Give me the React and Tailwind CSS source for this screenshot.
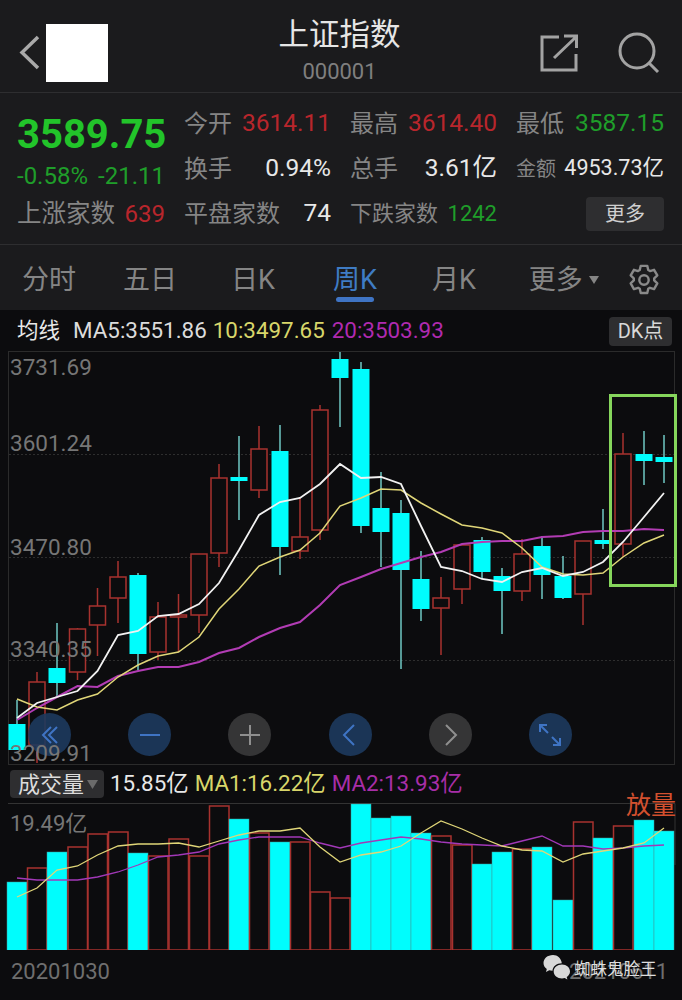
import React from 'react';

const SANS = "font-['Roboto','Noto_Sans_CJK_SC',sans-serif]";

// x, body top, body bottom, wick top, wick bottom, up(red) or down(cyan)
const candles = [
  [17, 724, 750, 700, 750, 0], [37, 682, 745, 672, 763, 1], [57, 668, 683, 623, 697, 0], [77.5, 629, 672, 628, 680, 1],
  [97.5, 606, 625, 588, 656, 1], [118, 577, 598, 561, 623, 1], [138, 575, 654, 573, 670, 0], [158, 617, 652, 602, 660, 1],
  [178.5, 615, 617, 594, 652, 1], [199, 554, 615, 554, 633, 1], [219, 478, 553, 464, 567, 1], [239, 477, 481, 436, 520, 0],
  [259, 449, 490, 426, 498, 1], [280, 451, 547, 425, 575, 0], [300, 537, 551, 498, 559, 1], [320, 410, 530, 405, 540, 1],
  [340, 359, 378, 352, 427, 0], [361, 369, 526, 362, 533, 0], [381, 508, 532, 472, 567, 0], [401, 513, 570, 500, 669, 0],
  [421, 579, 609, 551, 621, 0], [441, 598, 608, 577, 655, 1], [462, 545, 589, 545, 604, 1], [482, 540, 572, 537, 579, 0],
  [502, 576, 591, 568, 634, 0], [522, 554, 591, 539, 601, 1], [542, 546, 575, 536, 599, 0], [563, 576, 598, 556, 599, 0],
  [583, 541, 594, 541, 625, 1], [603, 540, 544, 509, 549, 0], [623, 454, 544, 433, 557, 1], [644, 454, 461, 431, 485, 0],
  [664, 457, 462, 435, 483, 0],
];

const volumes = [
  [882, 0], [868, 1], [852, 0], [847, 1], [834, 1], [832, 1], [853, 0], [856, 1], [839, 1], [856, 1], [806, 1],
  [819, 0], [833, 1], [842, 0], [842, 1], [892, 1], [898, 1], [804, 0], [818, 0], [816, 0], [833, 0], [836, 1],
  [845, 1], [864, 0], [852, 0], [849, 1], [847, 0], [900, 0], [822, 1], [838, 0], [826, 1], [820, 0], [831, 0],
];

const ma5 = [718, 703, 697, 691, 671, 635, 631, 616, 614, 604, 583, 550, 515, 502, 498, 484, 464, 478, 477, 484, 526, 567, 571, 579, 582, 572, 568, 576, 572, 562, 542, 517, 493];
const ma10 = [699, 707, 710, 700, 694, 677, 665, 656, 652, 637, 609, 589, 566, 557, 550, 533, 506, 498, 489, 490, 503, 514, 525, 528, 533, 548, 567, 574, 575, 573, 557, 543, 535];
const ma20 = [720, 708, 697, 686, 687, 676, 671, 667, 667, 662, 653, 648, 637, 628, 622, 605, 585, 577, 569, 563, 557, 552, 544, 542, 541, 541, 537, 536, 532, 531, 531, 529, 530];
const vol1 = [897, 888, 870, 866, 855, 846, 844, 844, 843, 847, 841, 835, 831, 831, 828, 847, 862, 855, 852, 846, 833, 821, 829, 838, 846, 850, 851, 862, 854, 851, 848, 843, 828];
const vol2 = [878, 880, 880, 880, 877, 872, 865, 857, 855, 852, 844, 840, 837, 837, 837, 843, 848, 843, 840, 837, 839, 842, 844, 845, 846, 841, 836, 846, 846, 849, 848, 846, 845];

const linePoints = (values) => values.map((y, i) => `${candles[i][0]},${y}`).join(' ');

const Quote = ({ label, value, color, labelSize = 'text-[24px]', valueSize = 'text-[24.500px]' }) => (
  <div className="flex items-center justify-between whitespace-nowrap">
    <span className={`${labelSize} text-[#858585]`}>{label}</span>
    <span className={`${valueSize} ${color}`}>{value}</span>
  </div>
);

const Tab = ({ label, className }) => (
  <span className={`text-[27px] leading-none ${className}`}>{label}</span>
);

const RoundButton = ({ blue, children }) => (
  <div className={`flex h-[43px] w-[43px] items-center justify-center rounded-full ${blue ? 'bg-[#1d3a5e]/90' : 'bg-[#3a3a3b]/90'}`}>
    <svg width="26" height="26" viewBox="0 0 26 26" fill="none" stroke={blue ? '#3f74c4' : '#8f8f8f'} strokeWidth="2">
      {children}
    </svg>
  </div>
);

export default function App() {
  return (
    <div className={`${SANS} flex h-[1000px] w-[682px] flex-col overflow-hidden bg-[#0c0c0e]`}>
      {/* title bar */}
      <header className="grid h-[93px] grid-cols-[1fr_auto_1fr] items-center border-b border-[#2e2e30] bg-[#1b1b1d] pl-[19px] pr-[22px] pt-[13px]">
        <div className="flex items-center">
          <svg width="21" height="35" viewBox="0 0 21 35" fill="none" stroke="#a9a9a9" strokeWidth="3.5">
            <path d="M19 2 3 17.500 19 33" />
          </svg>
          <div className="ml-[6px] h-[58px] w-[62px] bg-white" />
        </div>
        <div className="flex flex-col items-center pb-[4px]">
          <span className="text-[30.500px] leading-[36px] text-[#e6e6e6]">上证指数</span>
          <span className="mt-[7px] text-[22px] leading-[24px] text-[#7f7f7f]">000001</span>
        </div>
        <div className="flex items-center justify-end">
          <svg width="38" height="38" viewBox="0 0 38 38" fill="none" stroke="#a3a3a3" strokeWidth="3" className="mr-[40px]">
            <path d="M19 3H2v33h34V20" />
            <path d="M14 24 36 3M24 2h12.500v12" />
          </svg>
          <svg width="42" height="42" viewBox="0 0 42 42" fill="none" stroke="#a3a3a3" strokeWidth="3">
            <circle cx="19" cy="19" r="17" />
            <path d="m31 31 9 9" />
          </svg>
        </div>
      </header>

      {/* quote */}
      <section className="flex h-[152px] border-b border-[#2e2e30] bg-[#1b1b1d] pl-[17px] pr-[18px] pt-[8px]">
        <div className="flex w-[148px] flex-col">
          <span className="mt-[14px] text-[40px] font-bold leading-[40px] text-[#22c42a]">3589.75</span>
          <div className="mt-[3px] flex justify-between text-[24px] leading-[36px] text-[#1f9e2a]">
            <span>-0.58%</span>
            <span>-21.11</span>
          </div>
          <div className="mt-[2px] flex items-center justify-between leading-[36px]">
            <span className="text-[24.500px] text-[#858585]">上涨家数</span>
            <span className="text-[24px] text-[#b8262c]">639</span>
          </div>
        </div>
        <div className="ml-[19px] grid flex-1 grid-cols-[147px_147px_148px] grid-rows-[45px_45px_45px] gap-x-[19px]">
          <Quote label="今开" value="3614.11" color="text-[#b8262c]" />
          <Quote label="最高" value="3614.40" color="text-[#b8262c]" />
          <Quote label="最低" value="3587.15" color="text-[#1f9e2a]" />
          <Quote label="换手" value="0.94%" color="text-[#e8e8e8]" />
          <Quote label="总手" value="3.61亿" color="text-[#e8e8e8]" />
          <Quote label="金额" value="4953.73亿" color="text-[#e8e8e8]" labelSize="text-[20px]" valueSize="text-[21.500px]" />
          <Quote label="平盘家数" value="74" color="text-[#e8e8e8]" />
          <Quote label="下跌家数" value="1242" color="text-[#1f9e2a]" labelSize="text-[22px]" valueSize="text-[22px]" />
          <div className="flex items-center justify-end">
            <span className="flex h-[34px] w-[78px] items-center justify-center rounded bg-[#2e2e30] text-[20px] text-[#d0d0d0]">更多</span>
          </div>
        </div>
      </section>

      {/* period tabs */}
      <nav className="relative flex h-[65px] items-center bg-[#1b1b1d] pl-[22px] pt-[5px]">
        <Tab label="分时" className="text-[#858585]" />
        <Tab label="五日" className="ml-[47px] text-[#858585]" />
        <Tab label="日K" className="ml-[54px] text-[#858585]" />
        <Tab label="周K" className="ml-[58px] text-[#3f7cc4]" />
        <Tab label="月K" className="ml-[55px] text-[#858585]" />
        <Tab label="更多" className="ml-[53px] text-[#858585]" />
        <svg width="10" height="8" viewBox="0 0 10 8" className="ml-[6px]"><path d="M0 0h10L5 8z" fill="#858585" /></svg>
        <svg width="34" height="36" viewBox="0 0 24 24" fill="none" stroke="#8a8a8a" strokeWidth="1.700" strokeLinejoin="round" className="ml-[28px]">
          <path d="M9.700 2h4.600l.7 3 1.200.7 2.900-.9 2.300 4-2.200 2.100v1.400l2.200 2.100-2.300 4-2.900-.9-1.200.7-.7 3H9.700l-.7-3-1.200-.7-2.900.9-2.300-4 2.200-2.100v-1.400L2.600 8.800l2.300-4 2.900.9L9 5z" />
          <circle cx="12" cy="12" r="3.300" />
        </svg>
        <div className="absolute bottom-[8px] left-[336px] h-[5px] w-[38px] rounded-full bg-[#3f74c4]" />
      </nav>

      {/* moving averages */}
      <div className="flex h-[40px] items-center pl-[17px] pr-[10px] pt-[2px] text-[22.400px]">
        <span className="text-[21.500px] text-[#e8e8e8]">均线</span>
        <span className="ml-[13px] text-[#dcdcdc]">MA5:3551.86</span>
        <span className="ml-[6px] text-[#d8d66a]">10:3497.65</span>
        <span className="ml-[7px] text-[#b02ab0]">20:3503.93</span>
        <span className="ml-auto flex h-[29px] w-[63px] items-center justify-center rounded bg-[#2e2e30] text-[20px] text-[#d8d8d8]">DK点</span>
      </div>

      {/* candlestick chart */}
      <div className="relative h-[420px] text-[22.500px] leading-none text-[#767676]">
        <svg width="682" height="420" viewBox="0 350 682 420" className="block">
          <rect x="8.500" y="351.500" width="666" height="413" fill="none" stroke="#2b2b2b" />
          {[454, 557, 660].map((y) => (
            <line key={y} x1="9" x2="674" y1={y + 0.5} y2={y + 0.5} stroke="#2e2e2e" strokeDasharray="2 2" />
          ))}
          {candles.map(([x, top, bottom, wickTop, wickBottom, up]) => (
            <g key={x}>
              <line x1={x} x2={x} y1={wickTop} y2={top} stroke={up ? '#a8322f' : '#6fc9c4'} strokeWidth="1.500" />
              <line x1={x} x2={x} y1={bottom} y2={wickBottom} stroke={up ? '#a8322f' : '#6fc9c4'} strokeWidth="1.500" />
              {up ? (
                <rect x={x - 8} y={top} width="16" height={Math.max(bottom - top, 2)} fill="#0c0c0e" stroke="#a8322f" strokeWidth="1.500" />
              ) : (
                <rect x={x - 8.500} y={top} width="17" height={bottom - top} fill="#00fdfd" />
              )}
            </g>
          ))}
          <polyline points={linePoints(ma20)} fill="none" stroke="#b23cb4" strokeWidth="2" />
          <polyline points={linePoints(ma10)} fill="none" stroke="#e0d678" strokeWidth="1.500" />
          <polyline points={linePoints(ma5)} fill="none" stroke="#f2f2f2" strokeWidth="1.800" />
        </svg>
        <div className="absolute left-[609px] top-[44px] h-[193px] w-[68px] border-[3px] border-[#86d65c]" />
        <div className="absolute left-[28px] top-[363px] flex w-[544px] justify-between">
          <RoundButton blue><path d="M14 5 6 13l8 8M20 5l-8 8 8 8" /></RoundButton>
          <RoundButton blue><path d="M3 13h20" /></RoundButton>
          <RoundButton><path d="M3 13h20M13 3v20" /></RoundButton>
          <RoundButton blue><path d="m17 3-10 10 10 10" /></RoundButton>
          <RoundButton><path d="m9 3 10 10L9 23" /></RoundButton>
          <RoundButton blue><path d="M3 10V3h7M3 3l8 8M23 16v7h-7M23 23l-8-8" /></RoundButton>
        </div>
        <span className="absolute left-[10px] top-[6px]">3731.69</span>
        <span className="absolute left-[10px] top-[82px]">3601.24</span>
        <span className="absolute left-[10px] top-[186px]">3470.80</span>
        <span className="absolute left-[10px] top-[288px]">3340.35</span>
        <span className="absolute left-[10px] top-[392px]">3209.91</span>
      </div>

      {/* volume legend */}
      <div className="mt-[-1px] flex h-[30px] items-center pl-[10px] text-[22.400px]">
        <span className="flex h-[28px] w-[94px] items-center justify-between rounded bg-[#2e2e30] pl-[8px] pr-[6px] text-[22px] text-[#dcdcdc]">
          成交量
          <svg width="11" height="9" viewBox="0 0 11 9"><path d="M0 0h11L5.500 9z" fill="#6b6b6b" /></svg>
        </span>
        <span className="ml-[6px] text-[#e8e8e8]">15.85亿</span>
        <span className="ml-[6px] text-[#d8d66a]">MA1:16.22亿</span>
        <span className="ml-[6px] text-[#a82ea8]">MA2:13.93亿</span>
      </div>

      {/* volume chart */}
      <div className="relative h-[151px]">
        <svg width="682" height="151" viewBox="0 799 682 151" className="block">
          <path d="M8 803.500h667V865" fill="none" stroke="#333" />
          {volumes.map(([top, up], i) => {
            const x = candles[i][0];
            return up ? (
              <rect key={x} x={x - 9.500} y={top} width="19.500" height={950 - top} fill="#0c0c0e" stroke="#a8322f" strokeWidth="1.500" />
            ) : (
              <rect key={x} x={x - 10} y={top} width="20" height={951 - top} fill="#00fdfd" stroke="#3d9a9c" strokeWidth="0.500" />
            );
          })}
          <polyline points={linePoints(vol2)} fill="none" stroke="#a238b8" strokeWidth="1.300" />
          <polyline points={linePoints(vol1)} fill="none" stroke="#e0d678" strokeWidth="1.300" />
        </svg>
        <span className="absolute left-[10px] top-[12px] text-[22px] leading-[26px] text-[#767676]">19.49亿</span>
        <span className="absolute left-[626px] top-[-8px] text-[25px] leading-[30px] text-[#d2502e]">放量</span>
      </div>

      {/* dates and watermark */}
      <div className="relative mt-[9px] flex justify-between pl-[11px] pr-[14px] text-[22px] leading-[26px] text-[#6f6f6f]">
        <span>20201030</span>
        <span>20210611</span>
        <div className="absolute left-[543px] top-[-5px] flex items-center">
          <svg width="28" height="26" viewBox="0 0 28 26">
            <path d="M10 1C4.500 1 .5 4.600.5 9c0 2.500 1.300 4.500 3.300 6l-.8 3 3.200-1.700c1 .3 2 .5 3.300.5.100-4 4-7.500 9.300-7.500C18.300 4.500 14.500 1 10 1z" fill="#d8d8d8" />
            <path d="M19 10.500c-4.700 0-8.300 3-8.300 7s3.600 7 8.300 7c1 0 1.900-.2 2.700-.4l2.700 1.400-.7-2.500c1.900-1.300 3.300-3.200 3.300-5.500 0-4-3.500-7-8-7z" fill="#d8d8d8" />
          </svg>
          <span className="ml-[3px] mt-[5px] text-[16.500px] leading-[20px] text-[#dedede]">蜘蛛鬼脸王</span>
        </div>
      </div>
    </div>
  );
}
